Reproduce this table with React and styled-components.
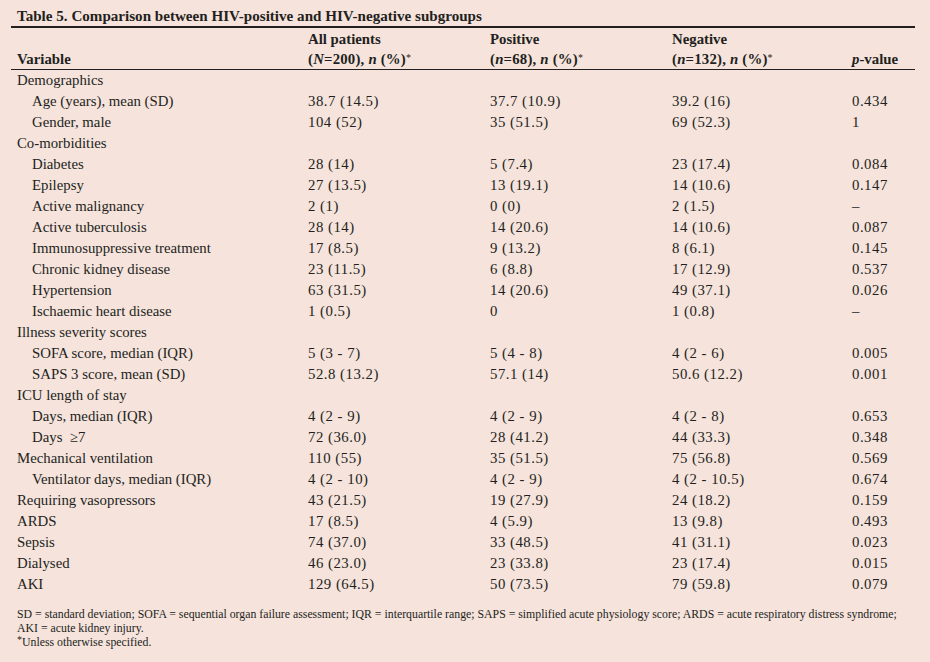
import React from "react";
import styled, { createGlobalStyle } from "styled-components";

const Global = createGlobalStyle`
  html, body { margin: 0; padding: 0; background: #f5e3dc; }
  body { font-family: "Liberation Serif", "Times New Roman", serif; color: #231f20; }
`;

const Page = styled.div`
  width: 930px;
  height: 662px;
  box-sizing: border-box;
  padding: 6px 15px 0 11px;
  background: #f5e3dc;
`;

const Title = styled.div`
  font-weight: bold;
  font-size: 15.1px;
  line-height: 20px;
  padding-left: 6px;
  border-bottom: 2.5px solid #231f20;
`;

const Row = styled.div`
  display: grid;
  grid-template-columns: 291px 182px 182px 180px 1fr;
  padding-left: 6px;
  font-size: 14.8px;
  line-height: 21px;
  height: 21px;
`;

const HeadRow = styled(Row)`
  height: 20px;
  line-height: 20px;
`;

const HeadBlock = styled.div`
  padding-top: 1px;
  border-bottom: 1.2px solid #231f20;
`;

const Cell = styled.div`
  white-space: pre;
  padding-left: ${(p) => (p.$indent ? "15px" : "0")};
  font-weight: ${(p) => (p.$bold ? "bold" : "normal")};
`;

const NumCell = styled(Cell)`
  letter-spacing: 0.5px;
`;

const HeadSub = styled(Cell)`
  font-weight: bold;
  letter-spacing: 0.2px;
`;

const Body = styled.div``;

const Star = styled.sup`
  font-size: 10px;
  vertical-align: 3px;
  line-height: 0;
  font-weight: normal;
`;

const Foot = styled.div`
  margin-top: 12px;
  padding-left: 6px;
  font-size: 11.8px;
  line-height: 14px;
`;

const rows = [
  ["Demographics", "", "", "", "", false],
  ["Age (years), mean (SD)", "38.7 (14.5)", "37.7 (10.9)", "39.2 (16)", "0.434", true],
  ["Gender, male", "104 (52)", "35 (51.5)", "69 (52.3)", "1", true],
  ["Co-morbidities", "", "", "", "", false],
  ["Diabetes", "28 (14)", "5 (7.4)", "23 (17.4)", "0.084", true],
  ["Epilepsy", "27 (13.5)", "13 (19.1)", "14 (10.6)", "0.147", true],
  ["Active malignancy", "2 (1)", "0 (0)", "2 (1.5)", "–", true],
  ["Active tuberculosis", "28 (14)", "14 (20.6)", "14 (10.6)", "0.087", true],
  ["Immunosuppressive treatment", "17 (8.5)", "9 (13.2)", "8 (6.1)", "0.145", true],
  ["Chronic kidney disease", "23 (11.5)", "6 (8.8)", "17 (12.9)", "0.537", true],
  ["Hypertension", "63 (31.5)", "14 (20.6)", "49 (37.1)", "0.026", true],
  ["Ischaemic heart disease", "1 (0.5)", "0", "1 (0.8)", "–", true],
  ["Illness severity scores", "", "", "", "", false],
  ["SOFA score, median (IQR)", "5 (3 - 7)", "5 (4 - 8)", "4 (2 - 6)", "0.005", true],
  ["SAPS 3 score, mean (SD)", "52.8 (13.2)", "57.1 (14)", "50.6 (12.2)", "0.001", true],
  ["ICU length of stay", "", "", "", "", false],
  ["Days, median (IQR)", "4 (2 - 9)", "4 (2 - 9)", "4 (2 - 8)", "0.653", true],
  ["Days  \u22657", "72 (36.0)", "28 (41.2)", "44 (33.3)", "0.348", true],
  ["Mechanical ventilation", "110 (55)", "35 (51.5)", "75 (56.8)", "0.569", false],
  ["Ventilator days, median (IQR)", "4 (2 - 10)", "4 (2 - 9)", "4 (2 - 10.5)", "0.674", true],
  ["Requiring vasopressors", "43 (21.5)", "19 (27.9)", "24 (18.2)", "0.159", false],
  ["ARDS", "17 (8.5)", "4 (5.9)", "13 (9.8)", "0.493", false],
  ["Sepsis", "74 (37.0)", "33 (48.5)", "41 (31.1)", "0.023", false],
  ["Dialysed", "46 (23.0)", "23 (33.8)", "23 (17.4)", "0.015", false],
  ["AKI", "129 (64.5)", "50 (73.5)", "79 (59.8)", "0.079", false],
];

export default function App() {
  return (
    <Page>
      <Global />
      <Title>Table 5. Comparison between HIV-positive and HIV-negative subgroups</Title>
      <HeadBlock>
        <HeadRow>
          <Cell $bold></Cell>
          <Cell $bold>All patients</Cell>
          <Cell $bold>Positive</Cell>
          <Cell $bold>Negative</Cell>
          <Cell $bold></Cell>
        </HeadRow>
        <HeadRow>
          <Cell $bold>Variable</Cell>
          <HeadSub>(<i>N</i>=200), <i>n</i> (%)<Star>*</Star></HeadSub>
          <HeadSub>(<i>n</i>=68), <i>n</i> (%)<Star>*</Star></HeadSub>
          <HeadSub>(<i>n</i>=132), <i>n</i> (%)<Star>*</Star></HeadSub>
          <Cell $bold><i>p</i>-value</Cell>
        </HeadRow>
      </HeadBlock>
      <Body>
        {rows.map((r, i) => (
          <Row key={i}>
            <Cell $indent={r[5]}>{r[0]}</Cell>
            <NumCell>{r[1]}</NumCell>
            <NumCell>{r[2]}</NumCell>
            <NumCell>{r[3]}</NumCell>
            <NumCell>{r[4]}</NumCell>
          </Row>
        ))}
      </Body>
      <Foot>
        SD = standard deviation; SOFA = sequential organ failure assessment; IQR = interquartile range; SAPS = simplified acute physiology score; ARDS = acute respiratory distress syndrome;
        <br />
        AKI = acute kidney injury.
        <br />
        <Star>*</Star>Unless otherwise specified.
      </Foot>
    </Page>
  );
}
